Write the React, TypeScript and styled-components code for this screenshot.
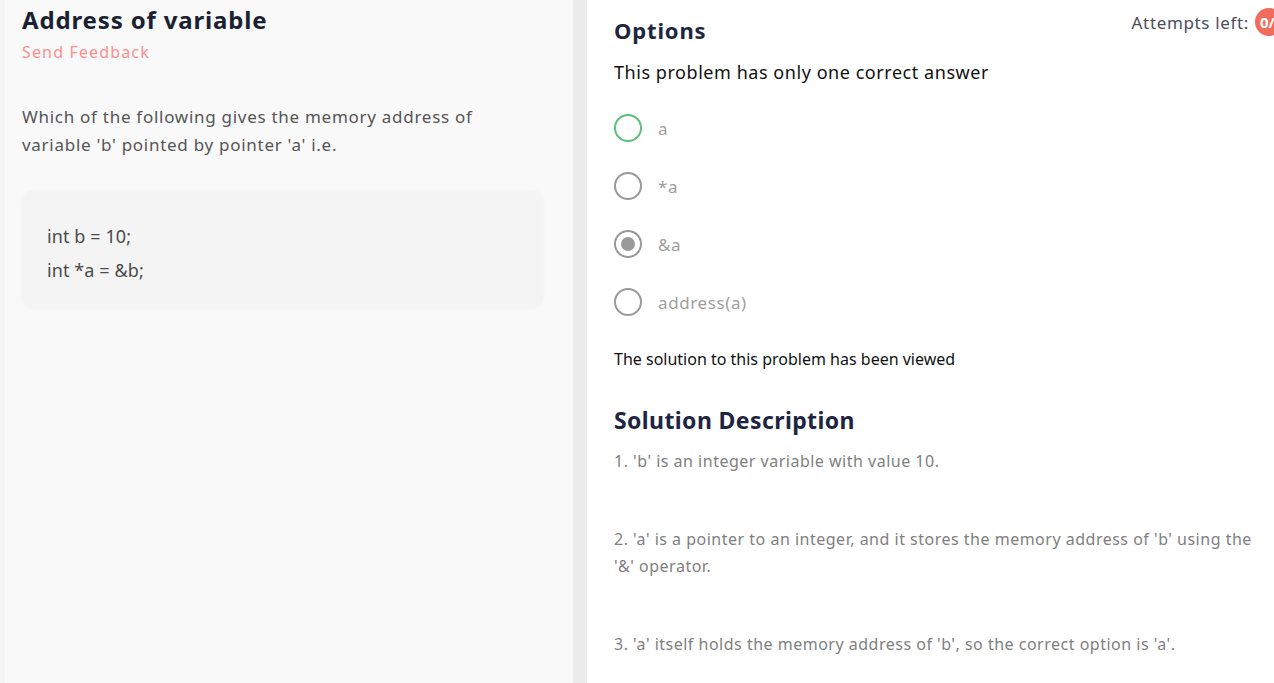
import styled, { createGlobalStyle } from 'styled-components';

const GlobalStyle = createGlobalStyle`
  html, body {
    margin: 0;
    padding: 0;
    background: #ffffff;
    font-family: "Noto Sans", Lato, sans-serif;
  }
  * {
    box-sizing: border-box;
  }
`;

const StyledPage = styled.div`
  display: flex;
  flex-direction: row;
  width: 1274px;
  height: 683px;
  overflow: hidden;
`;

const StyledProblemPanel = styled.div`
  width: 573px;
  flex-shrink: 0;
  background: #f9f9f9;
  border-left: 5px solid #f4f4f4;
  padding: 5px 30px 0 17px;
`;

const StyledDivider = styled.div`
  width: 14px;
  flex-shrink: 0;
  background: #ececec;
`;

const StyledTitle = styled.h1`
  margin: 0;
  font-size: 24px;
  font-weight: 700;
  color: #1a2133;
  line-height: 30px;
  letter-spacing: 0.85px;
`;

const StyledFeedback = styled.div`
  margin-top: 6px;
  font-size: 16px;
  color: #fd8e8e;
  letter-spacing: 1.15px;
`;

const StyledQuestion = styled.p`
  margin: 40px 0 0;
  font-size: 17px;
  line-height: 28px;
  color: #555555;
  letter-spacing: 0.72px;
`;

const StyledCodeBox = styled.div`
  margin-top: 32px;
  background: #f4f4f4;
  border-radius: 10px;
  box-shadow: 0 0 4px rgba(0, 0, 0, 0.03);
  padding: 28px 25px 21px;
`;

const StyledCodeLine = styled.div`
  font-size: 18px;
  line-height: 34px;
  color: #4a4a4a;
  letter-spacing: 0.1px;
`;

const StyledAnswerPanel = styled.div`
  flex: 1;
  position: relative;
  padding: 14px 0 0 27px;
  background: #ffffff;
`;

const StyledAttempts = styled.div`
  position: absolute;
  top: 8px;
  right: 0;
  display: flex;
  align-items: center;
  gap: 6px;
  font-size: 17px;
  color: #4a4d5c;
  letter-spacing: 0.65px;
`;

const StyledBadge = styled.div`
  width: 28px;
  height: 28px;
  margin-right: -9px;
  border-radius: 50%;
  background: #f26c5c;
  color: #ffffff;
  font-size: 15px;
  font-weight: 700;
  letter-spacing: 0;
  display: flex;
  align-items: center;
  padding-left: 5px;
`;

const StyledHeading = styled.h2`
  margin: 0;
  font-size: 22px;
  font-weight: 700;
  color: #1d2542;
  line-height: 32px;
  letter-spacing: 0.85px;
`;

const StyledSubheading = styled.div`
  margin-top: 14px;
  font-size: 18px;
  color: #111111;
  letter-spacing: 0.55px;
`;

const StyledOptions = styled.div`
  display: flex;
  flex-direction: column;
  gap: 30px;
  margin-top: 30px;
`;

const StyledOption = styled.div`
  display: flex;
  align-items: center;
  gap: 16px;
  height: 28px;
`;

type RadioProps = {
  $correct?: boolean;
  $checked?: boolean;
};

const StyledRadio = styled.div<RadioProps>`
  width: 28px;
  height: 28px;
  border-radius: 50%;
  border: 2px solid ${({ $correct }) => ($correct ? '#5cbf7c' : '#9a9a9a')};
  display: flex;
  align-items: center;
  justify-content: center;
  &::after {
    content: '';
    display: ${({ $checked }) => ($checked ? 'block' : 'none')};
    width: 14px;
    height: 14px;
    border-radius: 50%;
    background: #9a9a9a;
  }
`;

const StyledOptionLabel = styled.span`
  font-size: 17px;
  color: #a0a0a0;
  letter-spacing: 0.6px;
`;

const StyledViewed = styled.div`
  margin-top: 32px;
  font-size: 16px;
  color: #111111;
`;

const StyledSolutionHeading = styled(StyledHeading)`
  margin-top: 34px;
  font-size: 23px;
  letter-spacing: 0.4px;
`;

const StyledSolutionList = styled.div`
  margin-top: 12px;
  padding-right: 18px;
`;

const StyledSolutionItem = styled.p`
  margin: 0 0 51px;
  font-size: 16px;
  line-height: 27px;
  color: #808080;
  letter-spacing: 0.5px;
`;

const options = [
  { label: 'a', correct: true, checked: false },
  { label: '*a', correct: false, checked: false },
  { label: '&a', correct: false, checked: true },
  { label: 'address(a)', correct: false, checked: false },
];

const solution = [
  "1. 'b' is an integer variable with value 10.",
  "2. 'a' is a pointer to an integer, and it stores the memory address of 'b' using the '&' operator.",
  "3. 'a' itself holds the memory address of 'b', so the correct option is 'a'.",
];

export default function App() {
  return (
    <>
      <GlobalStyle />
      <StyledPage>
        <StyledProblemPanel>
          <StyledTitle>Address of variable</StyledTitle>
          <StyledFeedback>Send Feedback</StyledFeedback>
          <StyledQuestion>
            Which of the following gives the memory address of variable 'b' pointed by pointer 'a' i.e.
          </StyledQuestion>
          <StyledCodeBox>
            <StyledCodeLine>int b = 10;</StyledCodeLine>
            <StyledCodeLine>int *a = &amp;b;</StyledCodeLine>
          </StyledCodeBox>
        </StyledProblemPanel>
        <StyledDivider />
        <StyledAnswerPanel>
          <StyledAttempts>
            Attempts left:
            <StyledBadge>0/</StyledBadge>
          </StyledAttempts>
          <StyledHeading>Options</StyledHeading>
          <StyledSubheading>This problem has only one correct answer</StyledSubheading>
          <StyledOptions>
            {options.map((opt) => (
              <StyledOption key={opt.label}>
                <StyledRadio $correct={opt.correct} $checked={opt.checked} />
                <StyledOptionLabel>{opt.label}</StyledOptionLabel>
              </StyledOption>
            ))}
          </StyledOptions>
          <StyledViewed>The solution to this problem has been viewed</StyledViewed>
          <StyledSolutionHeading>Solution Description</StyledSolutionHeading>
          <StyledSolutionList>
            {solution.map((item) => (
              <StyledSolutionItem key={item}>{item}</StyledSolutionItem>
            ))}
          </StyledSolutionList>
        </StyledAnswerPanel>
      </StyledPage>
    </>
  );
}
